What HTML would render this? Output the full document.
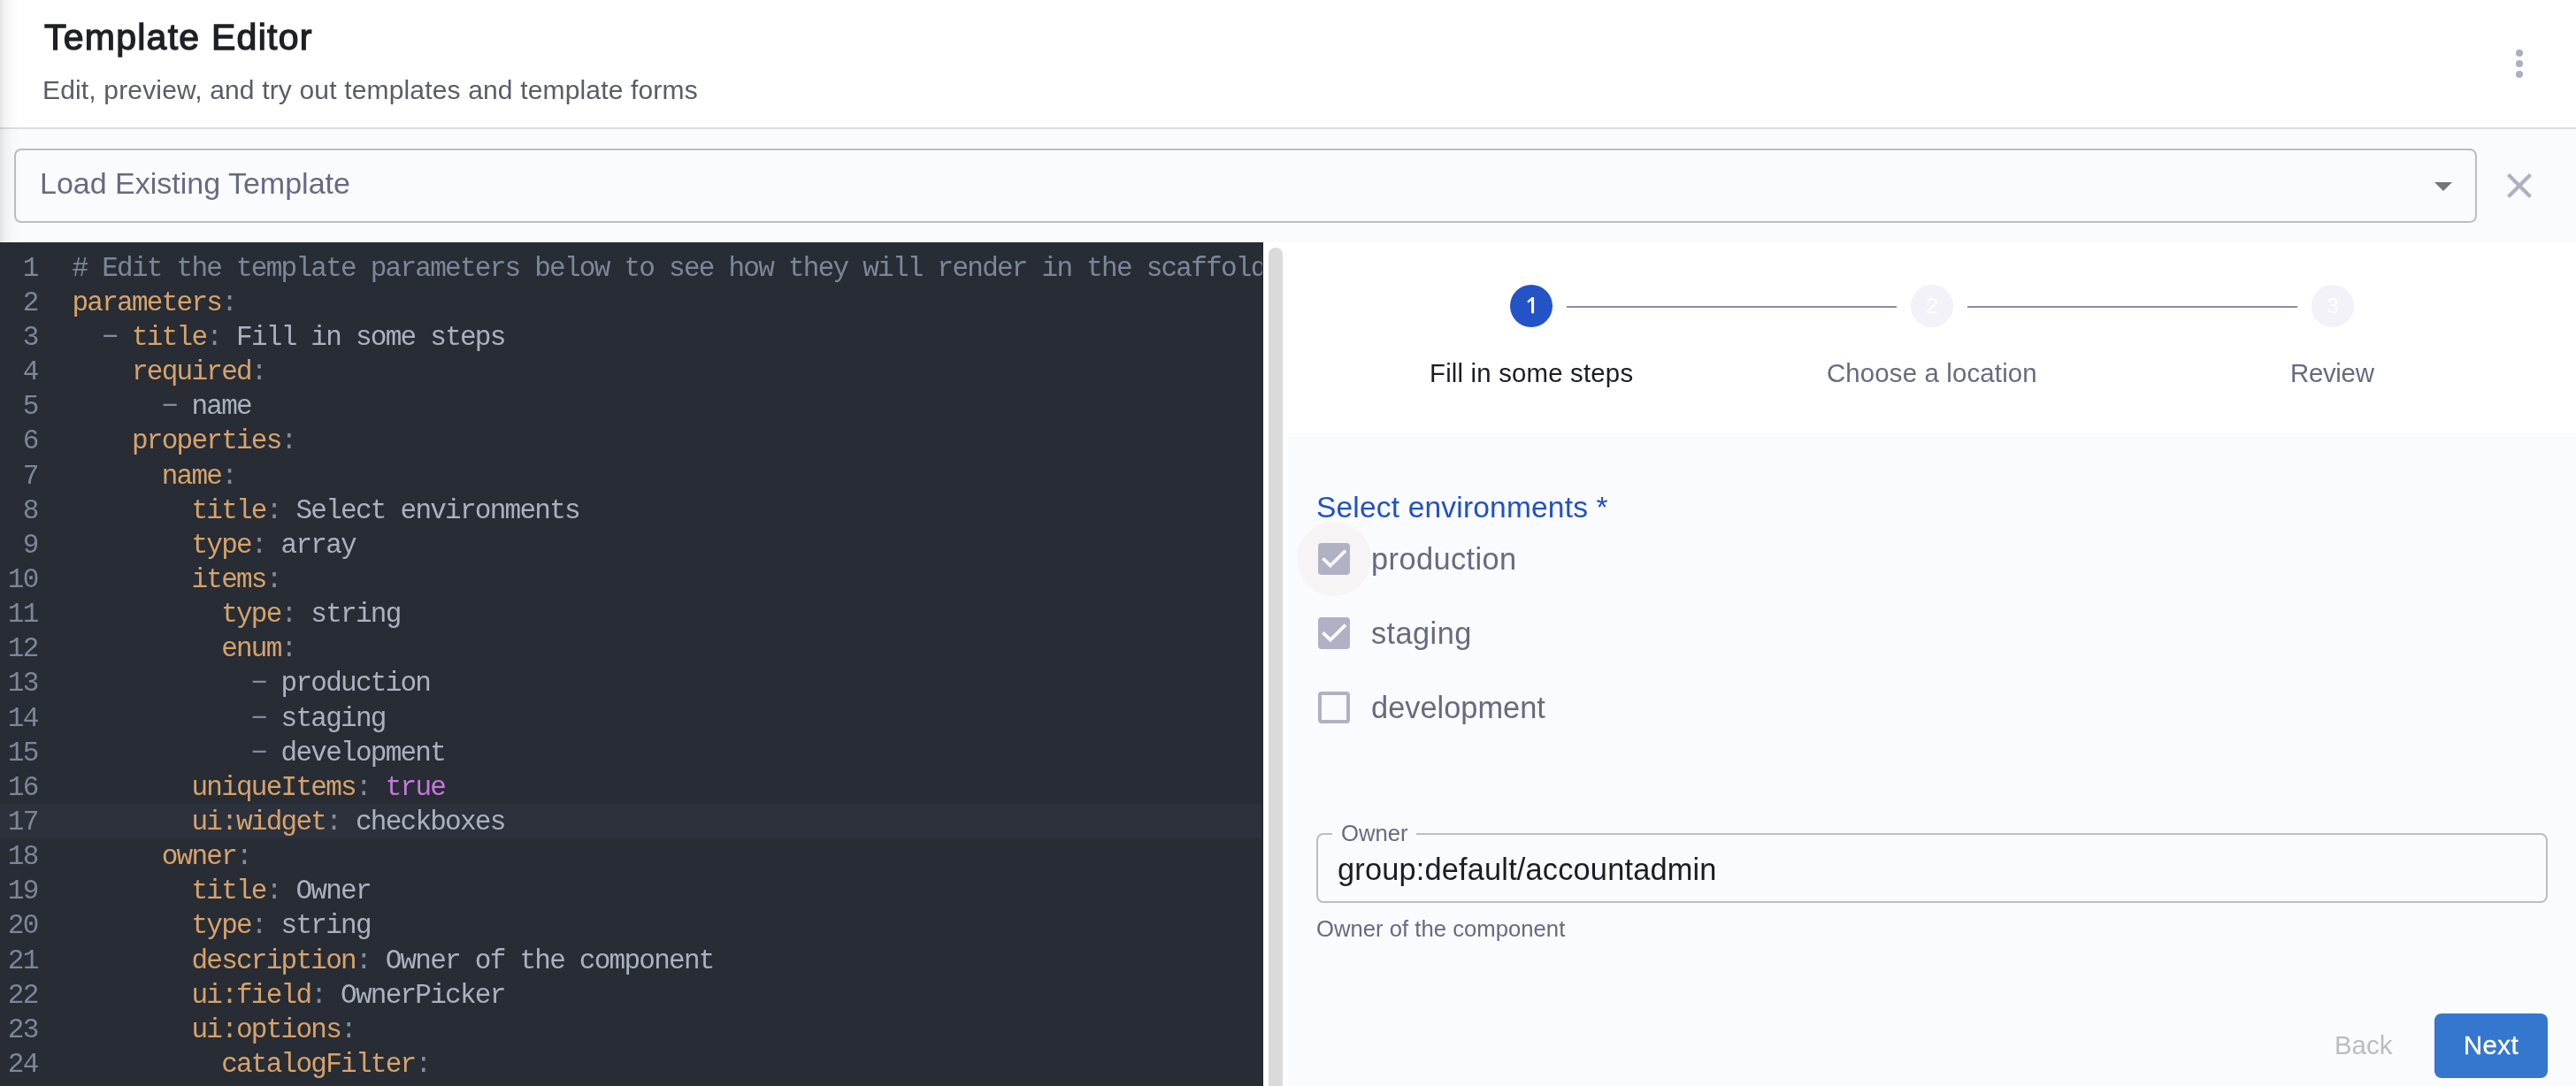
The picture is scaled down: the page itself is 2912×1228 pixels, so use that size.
<!DOCTYPE html>
<html><head><meta charset="utf-8">
<style>
*{box-sizing:border-box;margin:0;padding:0}
html,body{width:2912px;height:1228px;overflow:hidden;background:#fff}
body{position:relative;font-family:"Liberation Sans",sans-serif}
.abs,.ln{will-change:transform}
.abs{position:absolute;white-space:pre}
#hdr{position:absolute;left:0;top:0;width:2912px;height:144px;background:#fff}
#shadow{position:absolute;left:0;top:0;width:24px;height:274px;background:linear-gradient(to right,rgba(0,0,0,0.1),rgba(0,0,0,0.045) 6px,rgba(0,0,0,0.015) 14px,rgba(0,0,0,0) 24px)}
#divider{position:absolute;left:0;top:144px;width:2912px;height:2px;background:#dcdde6}
#toolbar{position:absolute;left:0;top:146px;width:2912px;height:128px;background:#fafbfe}
#select{position:absolute;left:16px;top:168px;width:2784px;height:84px;border:2px solid #bdbdc2;border-radius:8px;background:transparent}
#editor{position:absolute;left:0;top:274px;width:1428px;height:954px;background:#282c34;overflow:hidden}
.ln{position:absolute;left:0;width:1428px;height:39.15px;line-height:39.15px;font-family:"Liberation Mono",monospace;font-size:31px;letter-spacing:-1.74px;white-space:pre;color:#abb2bf}
.ln .g{position:absolute;left:0;width:42.5px;text-align:right;color:#7d8799}
.ln .c{position:absolute;left:81.5px}
.k{color:#d6a36c}.p{color:#abb2bf}.pu{color:#858e9f}.cm{color:#7d8799}.b{color:#c678dd}
#active{position:absolute;left:0;top:635px;width:1428px;height:39px;background:#2c313c}
#scroll{position:absolute;left:1434px;top:280px;width:16px;height:960px;border-radius:8px;background:#dadada}
#panel{position:absolute;left:1456px;top:490px;width:1456px;height:738px;background:#fafbfe}
.circ{position:absolute;width:48px;height:48px;border-radius:50%;top:322px;text-align:center;line-height:48px;font-size:24px;color:#fff}
.conn{position:absolute;top:346px;height:2px;background:#8b8ca7}
.cb{position:absolute;left:1490px;width:36px;height:36px;border-radius:4px;background:#b0b1c4}
</style></head><body>
<div id="hdr"></div>
<div class="abs" style="left:49.5px;top:21px;font-size:41px;line-height:42px;font-weight:400;letter-spacing:1.25px;-webkit-text-stroke:1.3px #1f2026;color:#1f2026">Template Editor</div>
<div class="abs" style="left:48px;top:87px;font-size:30px;line-height:30px;letter-spacing:0.16px;color:#5a5c68">Edit, preview, and try out templates and template forms</div>
<svg class="abs" style="left:2840px;top:52px" width="16" height="40"><circle cx="8" cy="8" r="4" fill="#adadc3"/><circle cx="8" cy="20" r="4" fill="#adadc3"/><circle cx="8" cy="32" r="4" fill="#adadc3"/></svg>
<div id="divider"></div>
<div id="toolbar"></div>
<div id="select"></div>
<div id="shadow"></div>
<div class="abs" style="left:45px;top:190px;font-size:34px;line-height:34px;color:#686a82">Load Existing Template</div>
<svg class="abs" style="left:2752px;top:206px" width="20" height="10"><path d="M0 0L20 0L10 10Z" fill="#757575"/></svg>
<svg class="abs" style="left:2834px;top:196px" width="28" height="28"><path d="M1.5 1.5L26.5 26.5M26.5 1.5L1.5 26.5" stroke="#b0b0c4" stroke-width="4.2"/></svg>

<div id="editor">
<div id="active"></div>
<div class="ln" style="top:9.60px"><span class="g">1</span><span class="c"><span class="cm"># Edit the template parameters below to see how they will render in the scaffold</span></span></div>
<div class="ln" style="top:48.75px"><span class="g">2</span><span class="c"><span class="k">parameters</span><span class="pu">:</span></span></div>
<div class="ln" style="top:87.90px"><span class="g">3</span><span class="c"><span class="p">  </span><span class="pu">−</span><span class="p"> </span><span class="k">title</span><span class="pu">:</span><span class="p"> Fill in some steps</span></span></div>
<div class="ln" style="top:127.05px"><span class="g">4</span><span class="c"><span class="p">    </span><span class="k">required</span><span class="pu">:</span></span></div>
<div class="ln" style="top:166.20px"><span class="g">5</span><span class="c"><span class="p">      </span><span class="pu">−</span><span class="p"> name</span></span></div>
<div class="ln" style="top:205.35px"><span class="g">6</span><span class="c"><span class="p">    </span><span class="k">properties</span><span class="pu">:</span></span></div>
<div class="ln" style="top:244.50px"><span class="g">7</span><span class="c"><span class="p">      </span><span class="k">name</span><span class="pu">:</span></span></div>
<div class="ln" style="top:283.65px"><span class="g">8</span><span class="c"><span class="p">        </span><span class="k">title</span><span class="pu">:</span><span class="p"> Select environments</span></span></div>
<div class="ln" style="top:322.80px"><span class="g">9</span><span class="c"><span class="p">        </span><span class="k">type</span><span class="pu">:</span><span class="p"> array</span></span></div>
<div class="ln" style="top:361.95px"><span class="g">10</span><span class="c"><span class="p">        </span><span class="k">items</span><span class="pu">:</span></span></div>
<div class="ln" style="top:401.10px"><span class="g">11</span><span class="c"><span class="p">          </span><span class="k">type</span><span class="pu">:</span><span class="p"> string</span></span></div>
<div class="ln" style="top:440.25px"><span class="g">12</span><span class="c"><span class="p">          </span><span class="k">enum</span><span class="pu">:</span></span></div>
<div class="ln" style="top:479.40px"><span class="g">13</span><span class="c"><span class="p">            </span><span class="pu">−</span><span class="p"> production</span></span></div>
<div class="ln" style="top:518.55px"><span class="g">14</span><span class="c"><span class="p">            </span><span class="pu">−</span><span class="p"> staging</span></span></div>
<div class="ln" style="top:557.70px"><span class="g">15</span><span class="c"><span class="p">            </span><span class="pu">−</span><span class="p"> development</span></span></div>
<div class="ln" style="top:596.85px"><span class="g">16</span><span class="c"><span class="p">        </span><span class="k">uniqueItems</span><span class="pu">:</span><span class="p"> </span><span class="b">true</span></span></div>
<div class="ln" style="top:636.00px"><span class="g">17</span><span class="c"><span class="p">        </span><span class="k">ui:widget</span><span class="pu">:</span><span class="p"> checkboxes</span></span></div>
<div class="ln" style="top:675.15px"><span class="g">18</span><span class="c"><span class="p">      </span><span class="k">owner</span><span class="pu">:</span></span></div>
<div class="ln" style="top:714.30px"><span class="g">19</span><span class="c"><span class="p">        </span><span class="k">title</span><span class="pu">:</span><span class="p"> Owner</span></span></div>
<div class="ln" style="top:753.45px"><span class="g">20</span><span class="c"><span class="p">        </span><span class="k">type</span><span class="pu">:</span><span class="p"> string</span></span></div>
<div class="ln" style="top:792.60px"><span class="g">21</span><span class="c"><span class="p">        </span><span class="k">description</span><span class="pu">:</span><span class="p"> Owner of the component</span></span></div>
<div class="ln" style="top:831.75px"><span class="g">22</span><span class="c"><span class="p">        </span><span class="k">ui:field</span><span class="pu">:</span><span class="p"> OwnerPicker</span></span></div>
<div class="ln" style="top:870.90px"><span class="g">23</span><span class="c"><span class="p">        </span><span class="k">ui:options</span><span class="pu">:</span></span></div>
<div class="ln" style="top:910.05px"><span class="g">24</span><span class="c"><span class="p">          </span><span class="k">catalogFilter</span><span class="pu">:</span></span></div>
</div>
<div class="abs" style="left:1427px;top:274px;width:1px;height:954px;background:#1d2026"></div>
<div id="scroll"></div>
<div id="panel"></div>
<div class="circ" style="left:1707px;background:#2453c8"></div>
<svg class="abs" style="left:1720px;top:330px" width="24" height="30"><rect x="11" y="6" width="3.1" height="18.2" fill="#fff"/><path d="M7 11.6L12 7.4" stroke="#fff" stroke-width="2.4" fill="none"/></svg>
<div class="conn" style="left:1771px;width:373px"></div>
<div class="circ" style="left:2160px;background:#f2f2f8">2</div>
<div class="conn" style="left:2224px;width:373px"></div>
<div class="circ" style="left:2613px;background:#f2f2f8">3</div>
<div class="abs" style="left:1616px;top:407px;font-size:29.4px;line-height:30px;letter-spacing:0.18px;color:#1c1d23">Fill in some steps</div>
<div class="abs" style="left:2065px;top:407px;font-size:29.4px;line-height:30px;letter-spacing:0.15px;color:#686a82">Choose a location</div>
<div class="abs" style="left:2589px;top:407px;font-size:29.4px;line-height:30px;letter-spacing:-0.3px;color:#686a82">Review</div>
<div class="abs" style="left:1488px;top:557px;font-size:33.6px;line-height:34px;letter-spacing:0.15px;color:#2151c4">Select environments *</div>
<div class="abs" style="left:1466px;top:590px;width:84px;height:84px;border-radius:50%;background:#f6f4f5"></div>
<div class="cb" style="top:614px"></div>
<svg class="abs" style="left:1490px;top:614px" width="36" height="36"><path d="M5.4 17.4L13.9 25.5L31 8.6" stroke="#f7f5f6" stroke-width="3.8" fill="none"/></svg>
<div class="cb" style="top:698px"></div>
<svg class="abs" style="left:1490px;top:698px" width="36" height="36"><path d="M5.4 17.4L13.9 25.5L31 8.6" stroke="#fafbfe" stroke-width="3.8" fill="none"/></svg>
<div class="cb" style="top:782px;background:transparent;border:4px solid #b0b1c4"></div>
<div class="abs" style="left:1550px;top:615px;font-size:34.4px;line-height:34px;letter-spacing:0.4px;color:#686a82">production</div>
<div class="abs" style="left:1550px;top:699px;font-size:34.4px;line-height:34px;letter-spacing:0.4px;color:#686a82">staging</div>
<div class="abs" style="left:1550px;top:783px;font-size:34.4px;line-height:34px;letter-spacing:0px;color:#686a82">development</div>
<div class="abs" style="left:1488px;top:942px;width:1392px;height:79px;border:2px solid #bcbcc2;border-radius:8px"></div>
<div class="abs" style="left:1506px;top:930px;width:95px;height:20px;background:#fafbfe"></div>
<div class="abs" style="left:1516px;top:929px;font-size:25.7px;line-height:26px;color:#686a82">Owner</div>
<div class="abs" style="left:1512px;top:966px;font-size:34.4px;line-height:34px;letter-spacing:0.16px;color:#1c1d23">group:default/accountadmin</div>
<div class="abs" style="left:1488px;top:1037px;font-size:25.7px;line-height:26px;color:#686a82">Owner of the component</div>
<div class="abs" style="left:2639px;top:1167px;font-size:29.4px;line-height:30px;color:#bdbdbd">Back</div>
<div class="abs" style="left:2752px;top:1146px;width:128px;height:73px;border-radius:8px;background:#3576cf"></div>
<div class="abs" style="left:2785px;top:1167px;font-size:29.4px;line-height:30px;letter-spacing:0.4px;color:#fff;-webkit-text-stroke:0.35px #fff">Next</div>
</body></html>
